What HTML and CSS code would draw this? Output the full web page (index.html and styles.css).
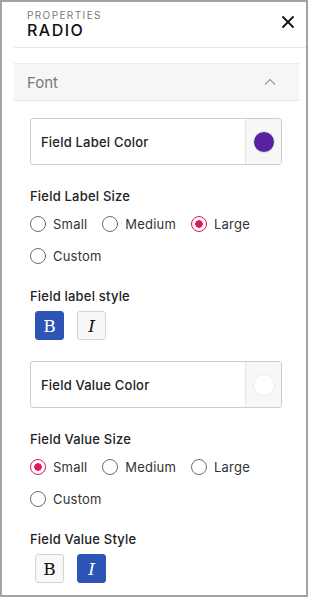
FILE: index.html
```html
<!DOCTYPE html>
<html lang="en">
<head>
    <meta charset="UTF-8">
    <meta name="viewport" content="width=device-width, initial-scale=1.0">
    <title>Properties - Radio</title>
    <link rel="stylesheet" href="styles.css">
</head>
<body>
    <div class="panel">
        <div class="panel-header">
            <div>
                <div class="eyebrow">PROPERTIES</div>
                <div class="title">RADIO</div>
            </div>
            <svg class="close" width="12" height="12" viewBox="0 0 12 12">
                <path d="M1 1L11 11M11 1L1 11" stroke="#111" stroke-width="1.8" stroke-linecap="round"/>
            </svg>
        </div>

        <div class="section">
            <div class="section-head">
                <span>Font</span>
                <svg width="12" height="8" viewBox="0 0 12 8">
                    <path d="M1 6.5L6 1.5L11 6.5" fill="none" stroke="#999" stroke-width="1.1"/>
                </svg>
            </div>

            <div class="section-body">
                <div class="color-field">
                    <span>Field Label Color</span>
                    <div class="swatch-cell"><span class="swatch purple"></span></div>
                </div>

                <div class="group-label">Field Label Size</div>
                <div class="radios">
                    <label class="radio"><span class="dot"></span>Small</label>
                    <label class="radio"><span class="dot"></span>Medium</label>
                    <label class="radio on"><span class="dot"></span>Large</label>
                    <label class="radio"><span class="dot"></span>Custom</label>
                </div>

                <div class="group-label">Field label style</div>
                <div class="styles">
                    <button class="style-btn active">B</button>
                    <button class="style-btn ital">I</button>
                </div>

                <div class="color-field">
                    <span>Field Value Color</span>
                    <div class="swatch-cell"><span class="swatch"></span></div>
                </div>

                <div class="group-label">Field Value Size</div>
                <div class="radios">
                    <label class="radio on"><span class="dot"></span>Small</label>
                    <label class="radio"><span class="dot"></span>Medium</label>
                    <label class="radio"><span class="dot"></span>Large</label>
                    <label class="radio"><span class="dot"></span>Custom</label>
                </div>

                <div class="group-label">Field Value Style</div>
                <div class="styles">
                    <button class="style-btn">B</button>
                    <button class="style-btn active ital">I</button>
                </div>
            </div>
        </div>
    </div>
</body>
</html>
```

FILE: styles.css
```css
body {
    margin: 0;
    font-family: Inter, "Open Sans", Arial, sans-serif;
    color: #222;
    background: #fff;
}

.panel {
    box-sizing: border-box;
    width: 308px;
    height: 597px;
    border: 2px solid #a3a3a3;
    overflow: hidden;
}

.panel-header {
    display: flex;
    justify-content: space-between;
    align-items: flex-start;
    margin-left: 12px;
    padding: 7px 12px 7px 13px;
    border-bottom: 1px solid #e8e8e8;
}

.eyebrow {
    font-size: 10px;
    letter-spacing: 1.4px;
    color: #7a7a7a;
    line-height: 12px;
}

.title {
    font-size: 16px;
    font-weight: 500;
    letter-spacing: 1.5px;
    color: #111;
    line-height: 19px;
}

.close {
    margin-top: 7px;
}

.section {
    margin: 15px 7px 0 12px;
}

.section-head {
    display: flex;
    justify-content: space-between;
    align-items: center;
    height: 36px;
    padding: 0 23px 0 13px;
    background: #f6f6f6;
    border-top: 1px solid #ececec;
    border-bottom: 1px solid #e4e4e4;
    font-size: 15px;
    color: #7a7a7a;
}

.section-body {
    padding: 17px 17px 0 16px;
}

.color-field {
    display: flex;
    justify-content: space-between;
    height: 45px;
    border: 1px solid #cdcdcd;
    border-radius: 3px;
    margin-bottom: 22px;
}

.color-field > span {
    align-self: center;
    padding-left: 10px;
    font-size: 13px;
    font-weight: 500;
    letter-spacing: 0.2px;
}

.swatch-cell {
    width: 35px;
    display: flex;
    align-items: center;
    justify-content: center;
    background: #f7f7f7;
    border-left: 1px solid #e6e6e6;
    border-radius: 0 3px 3px 0;
}

.swatch {
    box-sizing: border-box;
    width: 22px;
    height: 22px;
    border-radius: 50%;
    border: 1.5px solid #ececec;
    background: #fff;
}

.swatch.purple {
    background: #5a21a1;
}

.group-label {
    font-size: 13px;
    font-weight: 500;
    letter-spacing: 0.2px;
    line-height: 18px;
    margin-bottom: 10px;
}

.radios {
    display: flex;
    flex-wrap: wrap;
    column-gap: 15px;
    row-gap: 14px;
    margin-bottom: 22px;
}

.radio {
    display: flex;
    align-items: center;
    gap: 7px;
    font-size: 13px;
    letter-spacing: 0.2px;
    color: #333;
    line-height: 18px;
}

.dot {
    box-sizing: border-box;
    width: 16px;
    height: 16px;
    border-radius: 50%;
    border: 1.6px solid #6e6e6e;
}

.radio.on .dot {
    border-color: #e2175a;
    background: radial-gradient(circle, #e2175a 0 3.5px, #fff 4px);
}

.styles {
    display: flex;
    gap: 13px;
    padding-left: 5px;
    margin: -4px 0 21px;
}

.style-btn {
    box-sizing: border-box;
    width: 29px;
    height: 29px;
    padding: 0;
    border: 1px solid #d4d4d4;
    border-radius: 3px;
    background: #f8f8f8;
    color: #111;
    font-family: "DejaVu Serif", serif;
    font-size: 17px;
}

.style-btn.ital {
    font-style: italic;
}

.style-btn.active {
    background: #2e54b6;
    border-color: #2e54b6;
    color: #fff;
}
```
